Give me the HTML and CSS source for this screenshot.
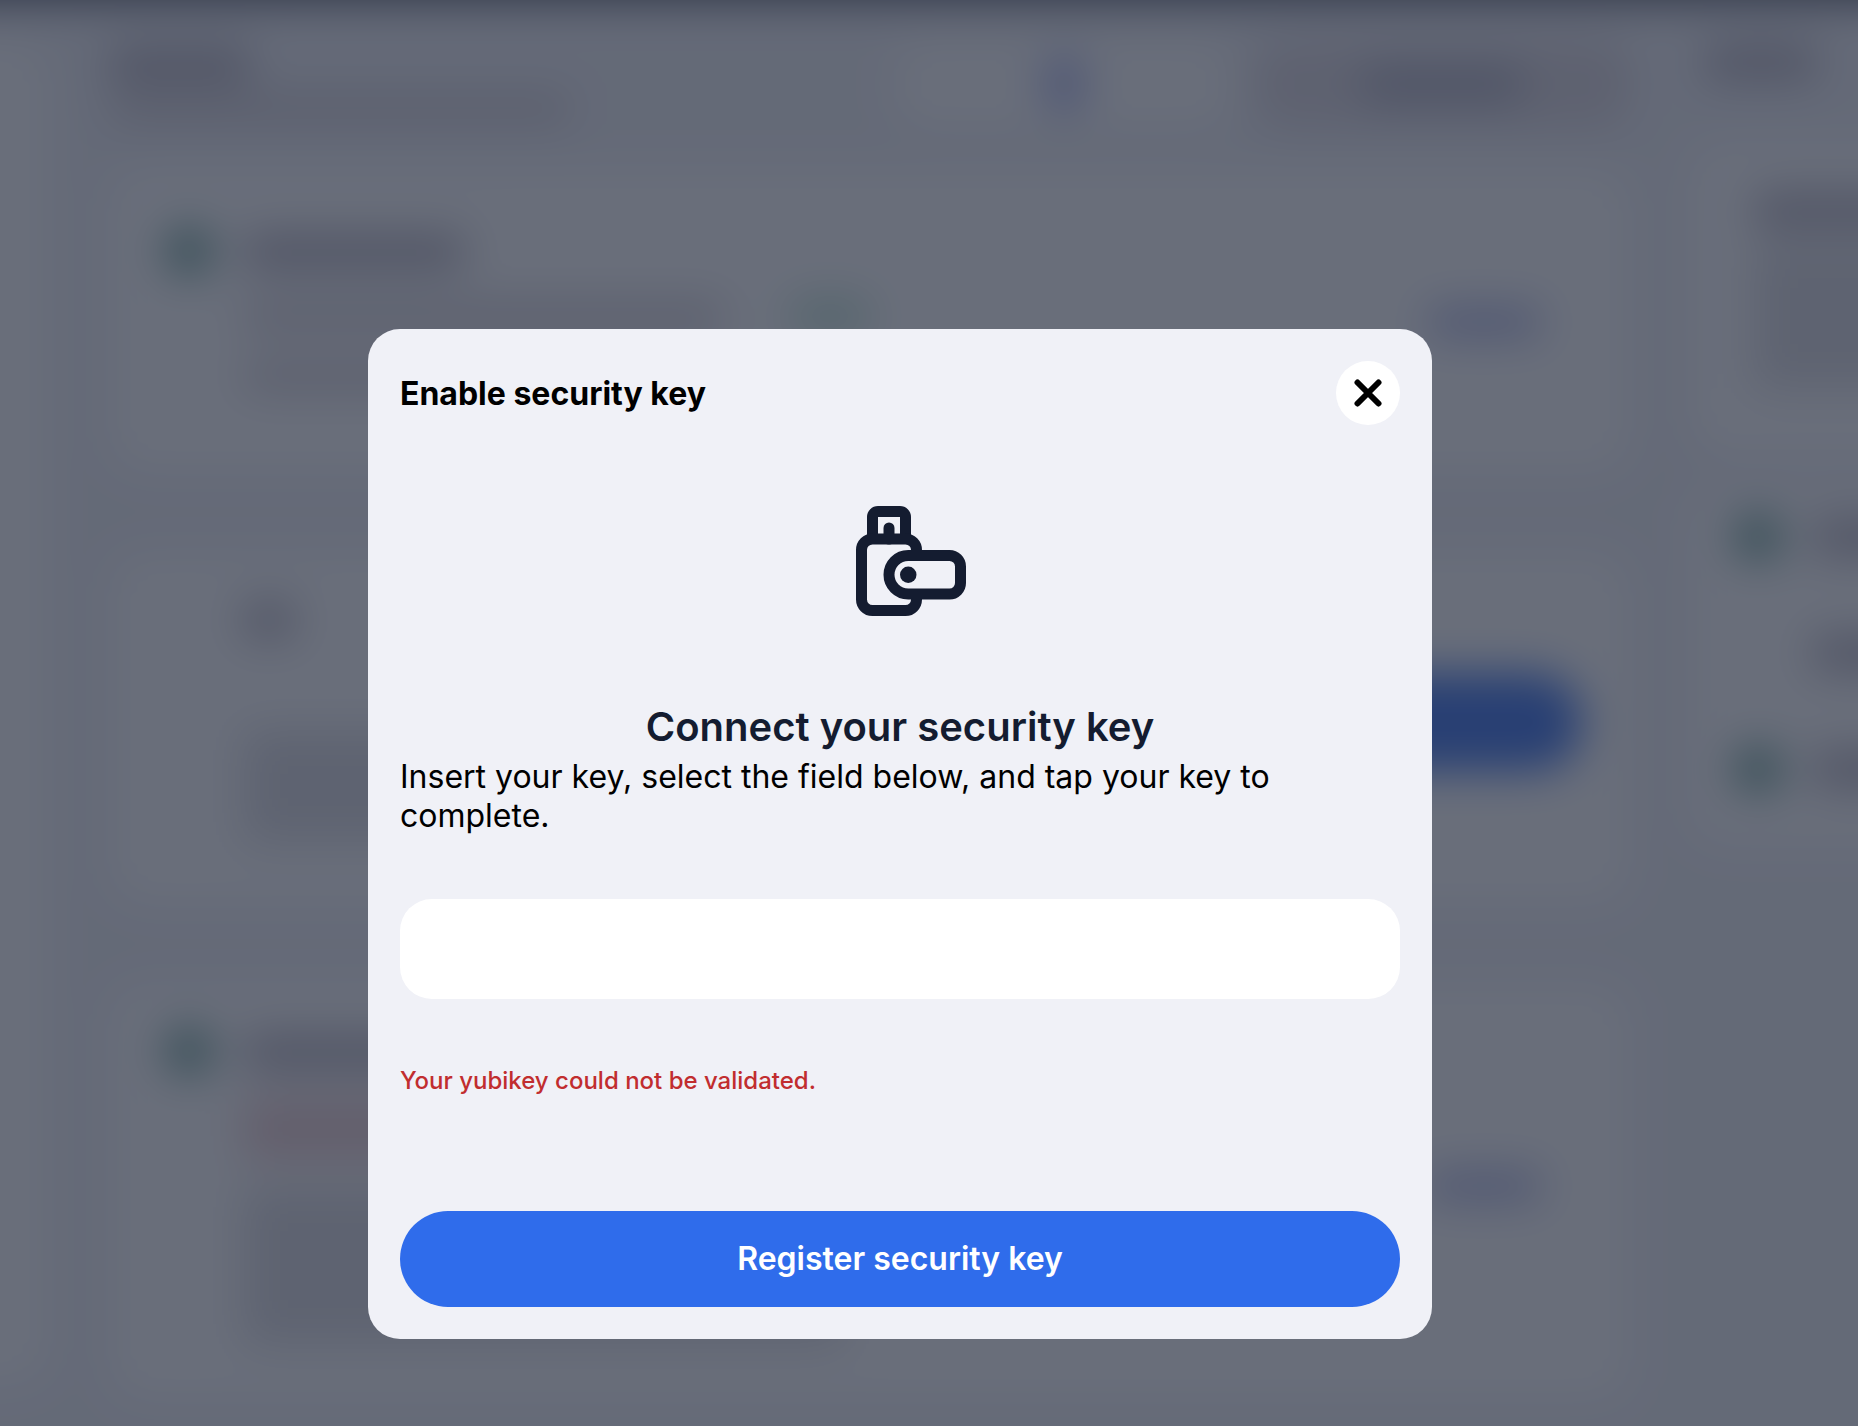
FILE: index.html
```html
<!DOCTYPE html>
<html lang="en">
<head>
<meta charset="utf-8">
<meta name="viewport" content="width=device-width, initial-scale=1">
<title>Enable security key</title>
<link rel="stylesheet" href="styles.css">
</head>
<body>
<div class="page" aria-hidden="true">
  <div class="topbar"></div>
  <div class="columns">
    <div class="sidebar"></div>
    <div class="main">
      <div class="intro">
        <div class="intro-text">
          <div class="bar title w-140"></div>
          <div class="bar w-460"></div>
        </div>
        <div class="search"><div class="search-icon"></div></div>
        <div class="select"><div class="bar strong w-160"></div></div>
      </div>
      <div class="card">
        <div class="dot"></div>
        <div class="lines">
          <div class="bar title w-220"></div>
          <div class="line-row"><div class="bar w-480"></div><div class="pill"></div></div>
          <div class="bar w-480"></div>
        </div>
        <div class="link"></div>
      </div>
      <div class="card">
        <div class="dot empty"></div>
        <div class="lines roomy">
          <div class="bar title w-50"></div>
          <div class="block"></div>
        </div>
        <div class="cta"></div>
      </div>
      <div class="card tall">
        <div class="dot"></div>
        <div class="lines">
          <div class="bar title w-480"></div>
          <div class="block warning"></div>
          <div class="block large"></div>
        </div>
        <div class="link"></div>
      </div>
    </div>
    <div class="aside">
      <div class="bar title w-110"></div>
      <div class="note">
        <div class="bar title"></div>
        <div class="block note-text"></div>
      </div>
      <div class="steps">
        <div class="step"><div class="dot"></div><div class="bar title"></div></div>
        <div class="step"><div class="dot empty"></div><div class="bar title"></div></div>
        <div class="step"><div class="dot"></div><div class="bar title"></div></div>
      </div>
    </div>
  </div>
</div>

<div class="overlay">
  <form class="modal" role="dialog" aria-modal="true" aria-labelledby="modal-title">
    <header class="modal-header">
      <h1 class="modal-title" id="modal-title">Enable security key</h1>
      <button class="close" type="button" aria-label="Close">
        <svg width="28" height="28" viewBox="0 0 28 28" fill="none" stroke="currentColor" stroke-width="6" stroke-linecap="round"><path d="M3.500 3.500l21 21M24.500 3.500l-21 21"/></svg>
      </button>
    </header>
    <svg class="key-icon" viewBox="0 0 24 24" fill="none" stroke="currentColor" stroke-width="2" aria-hidden="true">
      <path d="M7 8V4a1 1 0 0 1 1-1h4a1 1 0 0 1 1 1v4"/>
      <path d="M10 8V6" stroke-linecap="round"/>
      <rect x="5" y="8" width="10" height="13" rx="2"/>
      <path class="swivel" d="M13.500 11H21a2 2 0 0 1 2 2v3a2 2 0 0 1-2 2h-7.500a3.500 3.500 0 0 1 0-7z"/>
      <circle cx="13.500" cy="14.500" r="1.500" fill="currentColor" stroke="none"/>
    </svg>
    <h2 class="heading">Connect your security key</h2>
    <label class="instructions" for="key-field">Insert your key, select the field below, and tap your key to complete.</label>
    <input class="field" id="key-field" type="text" autocomplete="off" aria-describedby="key-error">
    <p class="error" id="key-error">Your yubikey could not be validated.</p>
    <button class="submit" type="submit">Register security key</button>
  </form>
</div>
</body>
</html>
```
FILE: styles.css
```css
* {
  box-sizing: border-box;
}

body {
  margin: 0;
  min-height: 100vh;
  background: #eff0f6;
  color: #000;
  font-family: Inter, "Liberation Sans", sans-serif;
}

/* Page behind the dialog. It reaches past the window so the blur has no edge. */
.page {
  position: fixed;
  inset: -64px;
  overflow: hidden;
  background: #eff0f6;
  filter: blur(22px);
}

.topbar {
  height: 64px;
  background: #3c4254;
}

.columns {
  display: grid;
  grid-template-columns: 114px minmax(0, 1fr) 232px;
  column-gap: 60px;
}

.sidebar {
  margin-top: 40px;
  height: 1344px;
  border-radius: 0 32px 32px 0;
  background: #fff;
}

.main {
  display: flex;
  flex-direction: column;
  gap: 80px;
  padding-top: 40px;
}

.intro {
  display: flex;
  gap: 20px;
  height: 88px;
  margin-bottom: -40px;
}

.intro-text {
  display: flex;
  flex: 1;
  flex-direction: column;
  gap: 12px;
  padding-top: 6px;
}

.search {
  display: flex;
  align-items: center;
  justify-content: center;
  width: 340px;
  border-radius: 32px;
  background: #fff;
}

.search-icon {
  width: 40px;
  height: 56px;
  border-radius: 16px;
  background: #a4aeee;
}

.select {
  display: flex;
  align-items: center;
  justify-content: center;
  width: 376px;
  border-radius: 32px;
  background: #dad5dd;
}

.card {
  display: flex;
  gap: 32px;
  height: 304px;
  padding: 60px 48px 56px 56px;
  border-radius: 32px;
  background: #fff;
}

.card + .card {
  height: 352px;
  padding-top: 44px;
}

.card.card.tall {
  height: 416px;
}

.dot {
  flex: none;
  width: 46px;
  height: 46px;
  border-radius: 50%;
  background: #45887c;
}

.dot.empty {
  background: transparent;
}

.lines {
  display: flex;
  flex: 1;
  flex-direction: column;
  gap: 28px;
  padding-top: 6px;
}

.lines.roomy {
  gap: 92px;
}

.line-row {
  display: flex;
  align-items: center;
  gap: 64px;
}

.bar {
  flex: none;
  height: 28px;
  border-radius: 8px;
  background: #cdc8d0;
}

.bar.title {
  height: 36px;
  background: #aeaab8;
}

.bar.strong {
  height: 36px;
  background: #a8a9bc;
}

.w-50 { width: 50px; }
.w-110 { width: 110px; }
.w-140 { width: 140px; }
.w-160 { width: 160px; }
.w-220 { width: 220px; }
.w-460 { width: 460px; }
.w-480 { width: 480px; }

.block {
  width: 600px;
  height: 112px;
  background: #dadae0;
}

.block.warning {
  height: 64px;
  background: #ebcbd0;
}

.block.large {
  height: 164px;
}

.pill {
  width: 84px;
  height: 36px;
  border-radius: 18px;
  background: #b8e0d0;
}

.link {
  align-self: center;
  width: 112px;
  height: 28px;
  margin-right: 42px;
  border-radius: 8px;
  background: #a0a9e0;
}

.cta {
  align-self: center;
  width: 400px;
  height: 98px;
  border-radius: 48px;
  background: #2663e8;
}

.aside {
  display: flex;
  flex-direction: column;
  padding-top: 44px;
}

.aside > .bar {
  margin-left: 16px;
}

.note {
  margin-top: 64px;
  height: 312px;
  padding: 48px 0 0 64px;
  border-radius: 32px 0 0 32px;
  background: #fff;
}

.note-text {
  width: 100%;
  height: 144px;
  margin-top: 16px;
}

.steps {
  display: flex;
  flex-direction: column;
  gap: 70px;
  margin-top: 32px;
  height: 356px;
  padding: 26px 0 0 45px;
  border-radius: 32px 0 0 32px;
  background: #fff;
}

.step {
  display: flex;
  align-items: center;
  gap: 32px;
}

.step .bar {
  flex: 1;
}

/* Dialog */
.overlay {
  position: fixed;
  inset: 0;
  display: flex;
  align-items: flex-start;
  justify-content: center;
  padding: 329px 58px 32px 0;
  overflow: auto;
  background: rgba(41, 48, 65, 0.7);
}

.modal {
  display: flex;
  flex-direction: column;
  width: 100%;
  max-width: 1064px;
  padding: 32px;
  border-radius: 32px;
  background: #f0f1f7;
}

.modal-header {
  display: flex;
  align-items: center;
  justify-content: space-between;
}

.modal-title {
  margin: 0;
  padding-top: 2px;
  font-size: 32px;
  font-weight: 700;
  line-height: 40px;
}

.close {
  display: flex;
  align-items: center;
  justify-content: center;
  width: 64px;
  height: 64px;
  padding: 0;
  border: 0;
  border-radius: 50%;
  background: #fff;
  color: #000;
}

.key-icon {
  align-self: center;
  width: 132px;
  height: 132px;
  margin: 70px 0 76px;
  color: #141c30;
}

.swivel {
  fill: #f0f1f7;
}

.heading {
  margin: 0;
  color: #141c30;
  font-size: 40px;
  font-weight: 600;
  line-height: 48px;
  text-align: center;
}

.instructions {
  margin-top: 6px;
  font-size: 32px;
  line-height: 39px;
}

.field {
  width: 100%;
  height: 100px;
  margin-top: 64px;
  padding: 0 32px;
  border: 0;
  border-radius: 32px;
  outline: 0;
  background: #fff;
  font: inherit;
  font-size: 32px;
}

.error {
  margin: 67px 0 0;
  color: #c12d2f;
  font-size: 24px;
  font-weight: 500;
  line-height: 30px;
}

.submit {
  height: 96px;
  margin-top: 115px;
  padding: 0 32px 2px;
  border: 0;
  border-radius: 48px;
  background: #2f6ceb;
  color: #fff;
  font: inherit;
  font-size: 32px;
  font-weight: 600;
}
```
